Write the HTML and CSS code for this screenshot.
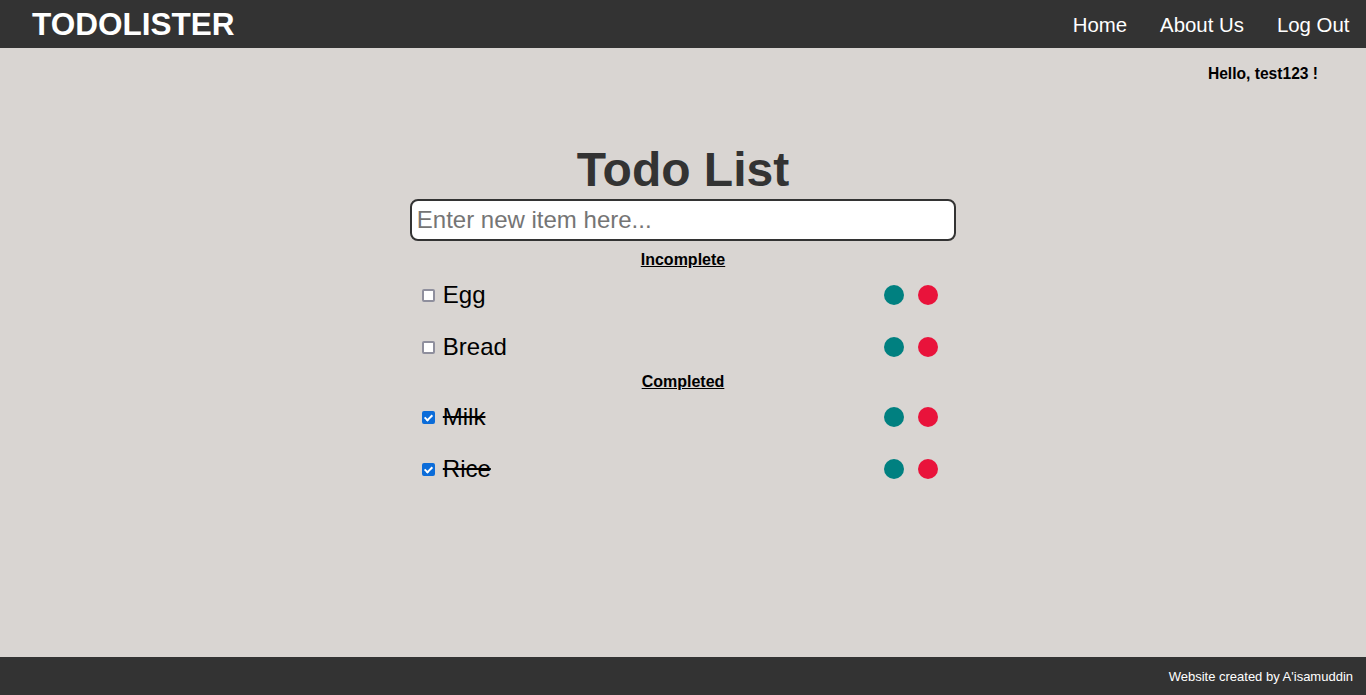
FILE: index.html
```html
<!DOCTYPE html>
<html lang="en">
<head>
<meta charset="utf-8">
<title>TodoLister</title>
<link rel="stylesheet" href="styles.css">
</head>
<body>
<header class="navbar">
  <div class="brand">TODOLISTER</div>
  <nav>
    <ul class="nav-links">
      <li><a href="#">Home</a></li>
      <li><a href="#">About Us</a></li>
      <li><a href="#">Log Out</a></li>
    </ul>
  </nav>
</header>
<main class="content">
  <div class="greeting">Hello, test123 !</div>
  <section class="todo">
    <h1 class="todo-title">Todo List</h1>
    <input class="todo-input" type="text" placeholder="Enter new item here...">
    <h2 class="section-label">Incomplete</h2>
    <ul class="items">
      <li class="item"><label class="item-label"><input type="checkbox" class="check"><span class="item-text">Egg</span></label><span class="actions"><span class="dot edit"></span><span class="dot delete"></span></span></li>
      <li class="item"><label class="item-label"><input type="checkbox" class="check"><span class="item-text">Bread</span></label><span class="actions"><span class="dot edit"></span><span class="dot delete"></span></span></li>
    </ul>
    <h2 class="section-label">Completed</h2>
    <ul class="items">
      <li class="item done"><label class="item-label"><input type="checkbox" class="check" checked><span class="item-text">Milk</span></label><span class="actions"><span class="dot edit"></span><span class="dot delete"></span></span></li>
      <li class="item done"><label class="item-label"><input type="checkbox" class="check" checked><span class="item-text">Rice</span></label><span class="actions"><span class="dot edit"></span><span class="dot delete"></span></span></li>
    </ul>
  </section>
</main>
<footer class="footer">Website created by A'isamuddin</footer>
</body>
</html>
```
FILE: styles.css
```css
html, body {
  margin: 0;
  padding: 0;
}
body {
  font-family: "Liberation Sans", Arial, sans-serif;
  background: #d9d5d2;
  color: #000;
  min-height: 100vh;
  display: flex;
  flex-direction: column;
}
.navbar {
  height: 48px;
  background: #333333;
  display: flex;
  align-items: center;
  justify-content: space-between;
  padding-left: 32px;
}
.brand {
  color: #fff;
  font-size: 31.5px;
  font-weight: bold;
  line-height: 48px;
}
.nav-links {
  list-style: none;
  margin: 0;
  padding: 0;
  display: flex;
}
.nav-links a {
  display: block;
  color: #fff;
  text-decoration: none;
  font-size: 20.4px;
  line-height: 48px;
  padding: 1px 16.5px 0;
}
.content {
  flex: 1;
  display: flex;
  flex-direction: column;
}
.greeting {
  align-self: flex-end;
  margin: 17px 48px 0 0;
  font-size: 15.6px;
  font-weight: bold;
  line-height: 18px;
}
.todo {
  width: 40%;
  align-self: center;
  margin-top: 59px;
  display: flex;
  flex-direction: column;
}
.todo-title {
  margin: 0;
  text-align: center;
  font-size: 48px;
  line-height: 56px;
  font-weight: bold;
  color: #333;
}
.todo-input {
  box-sizing: border-box;
  margin: 1px 0 0 0;
  height: 42px;
  width: 100%;
  border: 2px solid #333;
  border-radius: 8px;
  background: #fff;
  padding: 0 5px;
  font-family: "Liberation Sans", Arial, sans-serif;
  font-size: 24px;
  color: #000;
  outline: none;
}
.todo-input::placeholder {
  color: #757575;
}
.section-label {
  margin: 10px 0 0 0;
  text-align: center;
  font-size: 16px;
  line-height: 18px;
  font-weight: bold;
  text-decoration: underline;
}
.items + .section-label {
  margin-top: 0;
}
.items {
  list-style: none;
  margin: 0;
  padding: 0;
}
.item {
  height: 52px;
  display: flex;
  align-items: center;
  justify-content: space-between;
  padding: 0 18px 0 12px;
}
.item-label {
  display: flex;
  align-items: center;
  gap: 8px;
}
.check {
  appearance: none;
  -webkit-appearance: none;
  box-sizing: border-box;
  margin: 0;
  width: 13px;
  height: 13px;
  border: 2px solid #8f8f9d;
  border-radius: 2px;
  background: #fff;
  position: relative;
}
.check:checked {
  background: #0b6cd9;
  border-color: #0b6cd9;
}
.check:checked::after {
  content: "";
  position: absolute;
  left: 2.5px;
  top: 0px;
  width: 3px;
  height: 6px;
  border: solid #fff;
  border-width: 0 2px 2px 0;
  transform: rotate(45deg);
}
.item-text {
  font-size: 24px;
  line-height: 28px;
}
.done .item-text {
  text-decoration: line-through;
}
.actions {
  display: flex;
  gap: 14px;
}
.dot {
  width: 20px;
  height: 20px;
  border-radius: 50%;
  display: block;
}
.edit {
  background: #008080;
}
.delete {
  background: #e9133b;
}
.footer {
  height: 38px;
  background: #333333;
  color: #fff;
  font-size: 13px;
  line-height: 40px;
  text-align: right;
  padding-right: 13px;
}
```
